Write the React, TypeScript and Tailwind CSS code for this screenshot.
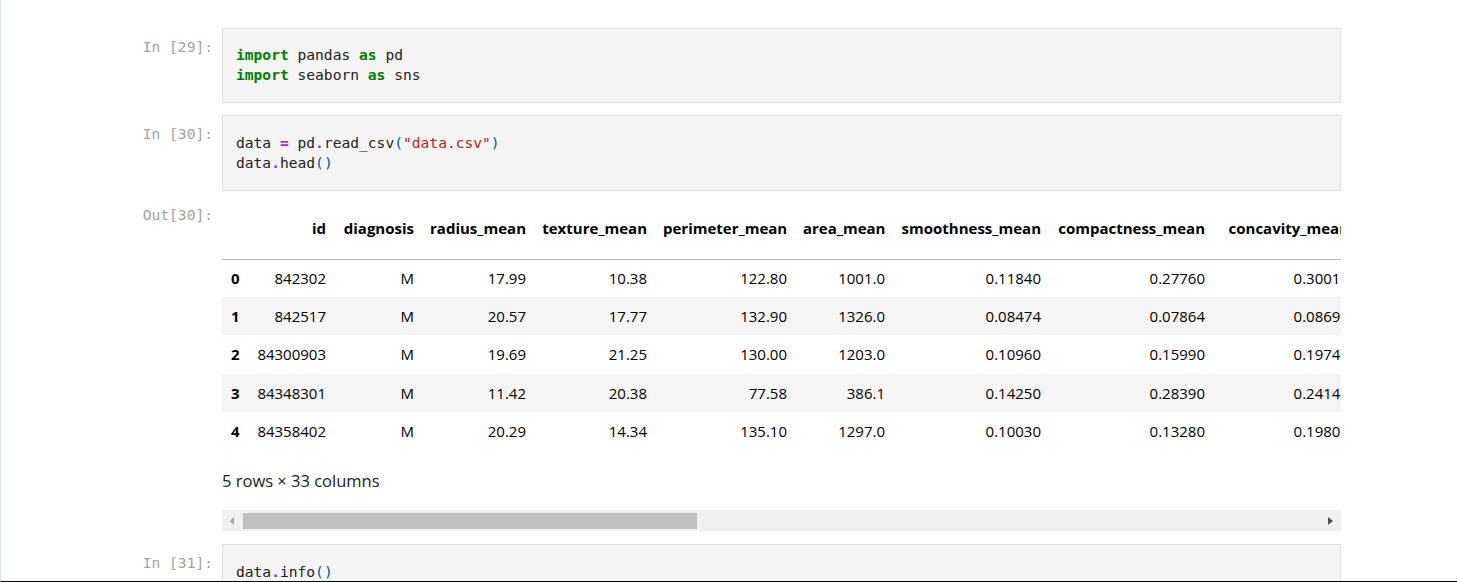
import React from "react";

const mono = "font-['DejaVu_Sans_Mono',monospace] text-[14.6px] leading-[20px]";
const sans = "font-['Open_Sans',sans-serif]";

const columns = [
  { name: "id", w: "w-[86px]" },
  { name: "diagnosis", w: "w-[88px]" },
  { name: "radius_mean", w: "w-[112px]" },
  { name: "texture_mean", w: "w-[121px]" },
  { name: "perimeter_mean", w: "w-[140px]" },
  { name: "area_mean", w: "w-[98px]" },
  { name: "smoothness_mean", w: "w-[156px]" },
  { name: "compactness_mean", w: "w-[164px]" },
  { name: "concavity_mean", w: "w-[144px]" },
  { name: "concave points_mean", w: "w-[180px]" },
];

const rows = [
  ["842302", "M", "17.99", "10.38", "122.80", "1001.0", "0.11840", "0.27760", "0.30010", "0.14710"],
  ["842517", "M", "20.57", "17.77", "132.90", "1326.0", "0.08474", "0.07864", "0.08690", "0.07017"],
  ["84300903", "M", "19.69", "21.25", "130.00", "1203.0", "0.10960", "0.15990", "0.19740", "0.12790"],
  ["84348301", "M", "11.42", "20.38", "77.58", "386.1", "0.14250", "0.28390", "0.24140", "0.10520"],
  ["84358402", "M", "20.29", "14.34", "135.10", "1297.0", "0.10030", "0.13280", "0.19800", "0.10430"],
];

const rowHeights = ["h-[38px]", "h-[38px]", "h-[39px]", "h-[38px]", "h-[38px]"];

function Prompt({ label, className = "" }: { label: string; className?: string }) {
  return (
    <div className={`w-[221px] shrink-0 pr-[9px] text-right text-[#a3a3a3] ${mono} ${className}`}>
      {label}
    </div>
  );
}

function CodeCell({
  label,
  children,
  height,
  top = "pt-[16px]",
}: {
  label: string;
  children: React.ReactNode;
  height: string;
  top?: string;
}) {
  return (
    <div className="flex">
      <Prompt label={label} className="pt-[9px]" />
      <div className={`w-[1119px] ${height} border border-[#e0e0e0] bg-[#f4f4f4] px-[13px] ${top} text-[#212121] ${mono}`}>
        {children}
      </div>
    </div>
  );
}

const kw = "font-bold text-[#008000]";
const op = "font-bold text-[#aa22ff]";
const paren = "text-[#0550ae]";

export default function App() {
  return (
    <div className="relative h-[582px] w-full overflow-hidden border-b border-l border-b-black border-l-[#d9e1ea] bg-white">
      <div className="flex flex-col pt-[28px]">
        <CodeCell label="In [29]:" height="h-[75px]">
          <div>
            <span className={kw}>import</span> pandas <span className={kw}>as</span> pd
          </div>
          <div>
            <span className={kw}>import</span> seaborn <span className={kw}>as</span> sns
          </div>
        </CodeCell>

        <div className="mt-[12px]">
          <CodeCell label="In [30]:" height="h-[76px]" top="pt-[17px]">
            <div>
              data <span className={op}>=</span> pd<span className={op}>.</span>read_csv
              <span className={paren}>(</span>
              <span className="text-[#ba2121]">"data.csv"</span>
              <span className={paren}>)</span>
            </div>
            <div>
              data<span className={op}>.</span>head<span className={paren}>()</span>
            </div>
          </CodeCell>
        </div>

        {/* output area */}
        <div className="mt-[12px] flex">
          <Prompt label="Out[30]:" className="pt-[2px]" />
          <div className="w-[1119px]">
            <div className="overflow-hidden">
              <table className={`w-[1315px] table-fixed border-collapse text-[15px] text-black ${sans}`}>
                <thead>
                  <tr className="h-[56px] border-b border-[#bdbdbd]">
                    <th className="w-[26px]" />
                    {columns.map((c) => (
                      <th
                        key={c.name}
                        className={`${c.w} whitespace-nowrap px-[8px] pb-[6px] text-right align-middle font-bold`}
                      >
                        {c.name}
                      </th>
                    ))}
                  </tr>
                </thead>
                <tbody>
                  {rows.map((r, i) => (
                    <tr key={i} className={`${rowHeights[i]} ${i % 2 === 1 ? "bg-[#f5f5f5]" : "bg-white"}`}>
                      <th className="pl-[9px] text-left font-bold">{i}</th>
                      {r.map((v, j) => (
                        <td key={j} className="whitespace-nowrap px-[8px] text-right">
                          {v}
                        </td>
                      ))}
                    </tr>
                  ))}
                </tbody>
              </table>
            </div>

            <p className={`mt-[19px] text-[16.5px] leading-[24px] text-[#212121] ${sans}`}>5 rows × 33 columns</p>

            {/* horizontal scrollbar */}
            <div className="mt-[17px] flex h-[21px] items-center bg-[#f0f0f0]">
              <div className="flex w-[21px] justify-center">
                <svg width="5" height="8" viewBox="0 0 5 8">
                  <path d="M4 0 L0 4 L4 8 Z" fill="#a3a3a3" />
                </svg>
              </div>
              <div className="h-[16px] w-[454px] bg-[#c1c1c1]" />
              <div className="flex-1" />
              <div className="flex w-[21px] justify-center">
                <svg width="5" height="8" viewBox="0 0 5 8">
                  <path d="M0 0 L5 4 L0 8 Z" fill="#505050" />
                </svg>
              </div>
            </div>
          </div>
        </div>

        <div className="mt-[13px]">
          <CodeCell label="In [31]:" height="h-[60px]" top="pt-[17px]">
            <div>
              data<span className={op}>.</span>info<span className={paren}>()</span>
            </div>
          </CodeCell>
        </div>
      </div>
    </div>
  );
}
